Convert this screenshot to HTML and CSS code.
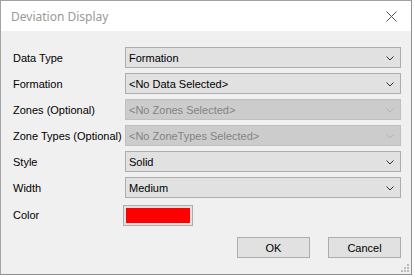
FILE: index.html
```html
<!DOCTYPE html>
<html lang="en">
<head>
    <meta charset="UTF-8">
    <title>Deviation Display</title>
    <link rel="stylesheet" href="styles.css">
</head>
<body>
    <div class="window">
        <div class="titlebar">
            <span class="title">Deviation Display</span>
            <svg class="close" width="11" height="11" viewBox="0 0 11 11">
                <path d="M0.5 0.5 L10.5 10.5 M10.5 0.5 L0.5 10.5" stroke="#555" stroke-width="1" fill="none"/>
            </svg>
        </div>
        <div class="content">
            <div class="form">
                <label>Data Type</label>
                <div class="combo"><span>Formation</span><svg class="chev" width="8" height="5" viewBox="0 0 8 5"><path d="M0.5 0.5 L4 4 L7.5 0.5" stroke="#333" fill="none"/></svg></div>

                <label>Formation</label>
                <div class="combo"><span>&lt;No Data Selected&gt;</span><svg class="chev" width="8" height="5" viewBox="0 0 8 5"><path d="M0.5 0.5 L4 4 L7.5 0.5" stroke="#333" fill="none"/></svg></div>

                <label>Zones (Optional)</label>
                <div class="combo disabled"><span>&lt;No Zones Selected&gt;</span><svg class="chev" width="8" height="5" viewBox="0 0 8 5"><path d="M0.5 0.5 L4 4 L7.5 0.5" stroke="#b4b4b4" fill="none"/></svg></div>

                <label>Zone Types (Optional)</label>
                <div class="combo disabled"><span>&lt;No ZoneTypes Selected&gt;</span><svg class="chev" width="8" height="5" viewBox="0 0 8 5"><path d="M0.5 0.5 L4 4 L7.5 0.5" stroke="#b4b4b4" fill="none"/></svg></div>

                <label>Style</label>
                <div class="combo"><span>Solid</span><svg class="chev" width="8" height="5" viewBox="0 0 8 5"><path d="M0.5 0.5 L4 4 L7.5 0.5" stroke="#333" fill="none"/></svg></div>

                <label>Width</label>
                <div class="combo"><span>Medium</span><svg class="chev" width="8" height="5" viewBox="0 0 8 5"><path d="M0.5 0.5 L4 4 L7.5 0.5" stroke="#333" fill="none"/></svg></div>

                <label class="color-label">Color</label>
                <div class="swatch"><div class="swatch-fill"></div></div>
            </div>

            <div class="buttons">
                <button>OK</button>
                <button>Cancel</button>
            </div>

            <svg class="grip" width="8" height="8" viewBox="0 0 8 8">
                <rect x="6" y="0" width="2" height="2" fill="#bcbcbc"/>
                <rect x="3" y="3" width="2" height="2" fill="#bcbcbc"/>
                <rect x="6" y="3" width="2" height="2" fill="#bcbcbc"/>
                <rect x="0" y="6" width="2" height="2" fill="#bcbcbc"/>
                <rect x="3" y="6" width="2" height="2" fill="#bcbcbc"/>
                <rect x="6" y="6" width="2" height="2" fill="#bcbcbc"/>
            </svg>
        </div>
    </div>
</body>
</html>
```

FILE: styles.css
```css
body {
    margin: 0;
    background: #ffffff;
    font-family: "Liberation Sans", Arial, sans-serif;
    font-size: 11px;
    color: #000;
}
.window {
    width: 410px;
    height: 273px;
    border: 1px solid #a3a3a3;
    border-right-color: #8f8f8f;
    border-bottom-color: #8f8f8f;
    display: flex;
    flex-direction: column;
}
.titlebar {
    height: 30px;
    background: #ffffff;
    display: flex;
    align-items: center;
    justify-content: space-between;
    padding: 0 14px 0 10px;
}
.title {
    font-family: "Noto Sans", "Open Sans", sans-serif;
    font-size: 12px;
    color: #999999;
    margin-top: 1px;
}
.close {
    margin-top: 1px;
}
.content {
    flex: 1;
    background: #f0f0f0;
    position: relative;
    padding: 16px 10px 0 12px;
}
.form {
    display: grid;
    grid-template-columns: 112px 276px;
    grid-auto-rows: 21px;
    row-gap: 5px;
}
label {
    display: flex;
    align-items: center;
    white-space: nowrap;
}
.combo {
    box-sizing: border-box;
    background: #e1e1e1;
    border: 1px solid #adadad;
    display: flex;
    align-items: center;
    justify-content: space-between;
    padding: 0 6px 0 3px;
}
.combo.disabled {
    background: #cccccc;
    border-color: #bfbfbf;
    color: #838383;
}
.chev {
    margin-top: 1px;
}
.color-label {
    margin-top: 2px;
}
.swatch {
    box-sizing: border-box;
    width: 70px;
    height: 21px;
    margin: 2px 0 0 -2px;
    border: 1px solid #adadad;
    background: #e1e1e1;
    padding: 2px;
}
.swatch-fill {
    height: 100%;
    background: #ff0000;
}
.buttons {
    display: flex;
    justify-content: flex-end;
    gap: 18px;
    margin-top: 13px;
    width: 388px;
}
button {
    box-sizing: border-box;
    width: 73px;
    height: 21px;
    background: #e1e1e1;
    border: 1px solid #adadad;
    font-family: "Liberation Sans", Arial, sans-serif;
    font-size: 11px;
    color: #000;
    padding: 0;
}
.grip {
    position: absolute;
    right: 2px;
    bottom: 2px;
}
```
